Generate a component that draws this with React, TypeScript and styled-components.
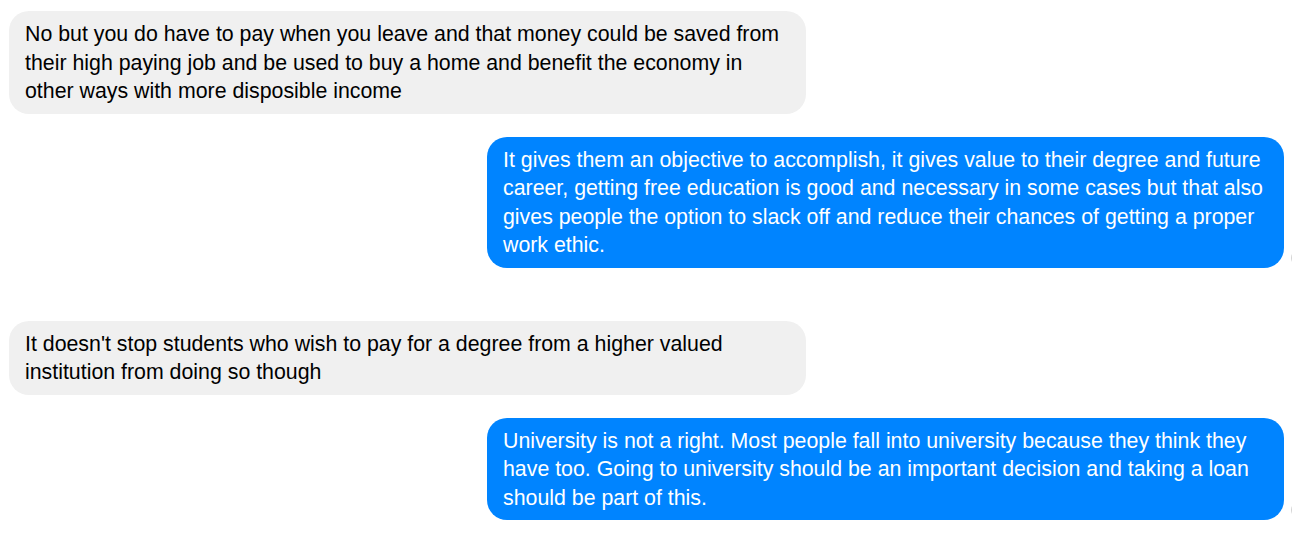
import React from "react";
import styled, { createGlobalStyle } from "styled-components";

const GlobalStyle = createGlobalStyle`
  html, body {
    margin: 0;
    padding: 0;
    background: #ffffff;
    overflow: hidden;
  }
  body {
    font-family: "Liberation Sans", Arial, sans-serif;
  }
`;

const Thread = styled.div`
  display: flex;
  flex-direction: column;
  padding: 11px 8px 0 9px;
`;

const Row = styled.div<{ $mine?: boolean; $after?: number }>`
  display: flex;
  justify-content: ${(p) => (p.$mine ? "flex-end" : "flex-start")};
  margin-bottom: ${(p) => p.$after ?? 23}px;
`;

const Bubble = styled.div<{ $mine?: boolean }>`
  position: relative;
  box-sizing: border-box;
  width: 797px;
  padding: 9px 16px 8px 16px;
  border-radius: 20px;
  background: ${(p) => (p.$mine ? "#0084ff" : "#f0f0f0")};
  color: ${(p) => (p.$mine ? "#ffffff" : "#000000")};
  font-size: 16pt;
  line-height: 28.5px;
`;

const SeenDot = styled.span`
  position: absolute;
  right: -23px;
  bottom: 2px;
  width: 16px;
  height: 16px;
  border-radius: 50%;
  background: #d4d4d4;
`;

type Msg = { text: string; mine: boolean; after?: number };

const messages: Msg[] = [
  {
    text: "No but you do have to pay when you leave and that money could be saved from their high paying job and be used to buy a home and benefit the economy in other ways with more disposible income",
    mine: false,
  },
  {
    text: "It gives them an objective to accomplish, it gives value to their degree and future career, getting free education is good and necessary in some cases but that also gives people the option to slack off and reduce their chances of getting a proper work ethic.",
    mine: true,
    after: 53,
  },
  {
    text: "It doesn't stop students who wish to pay for a degree from a higher valued institution from doing so though",
    mine: false,
  },
  {
    text: "University is not a right. Most people fall into university because they think they have too. Going to university should be an important decision and taking a loan should be part of this.",
    mine: true,
    after: 12,
  },
];

export default function App() {
  return (
    <>
      <GlobalStyle />
      <Thread>
        {messages.map((m, i) => (
          <Row key={i} $mine={m.mine} $after={m.after}>
            <Bubble $mine={m.mine}>
              {m.text}
              {m.mine && <SeenDot />}
            </Bubble>
          </Row>
        ))}
      </Thread>
    </>
  );
}
